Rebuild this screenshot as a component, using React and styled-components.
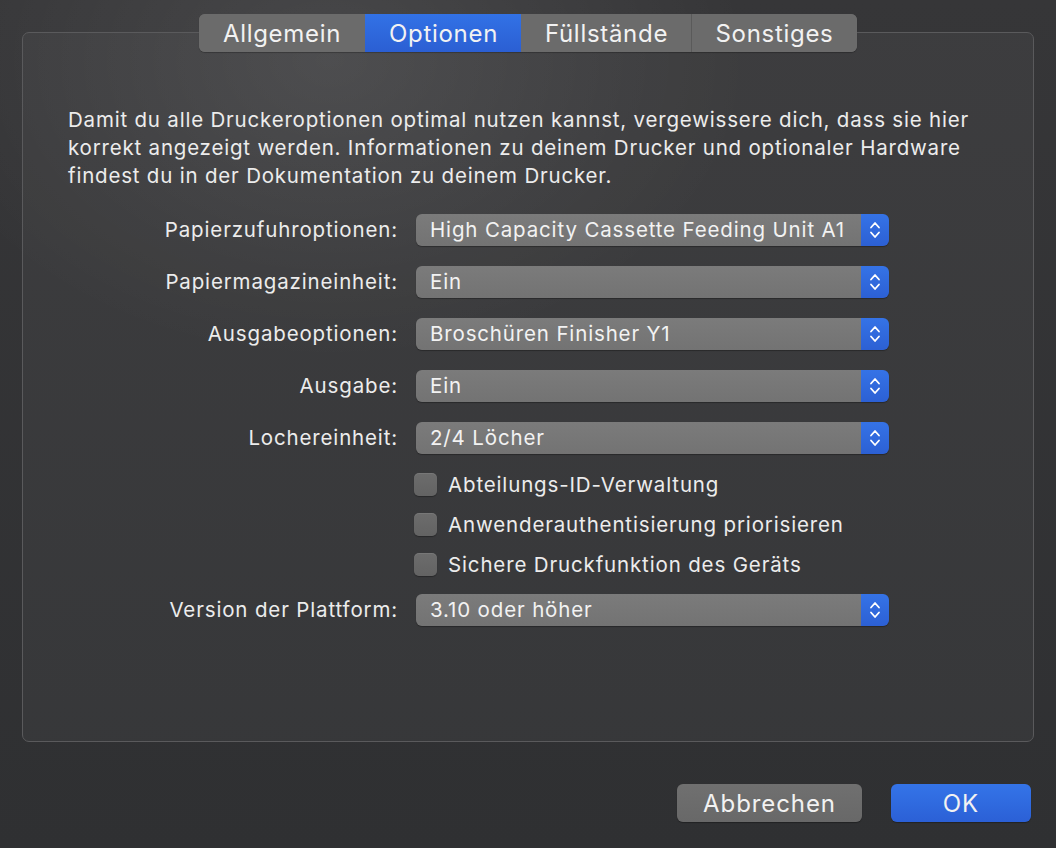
import React from "react";
import styled, { createGlobalStyle } from "styled-components";

const GlobalStyle = createGlobalStyle`
    html, body {
        margin: 0;
        padding: 0;
        background: #2f3032;
    }
    * {
        box-sizing: border-box;
    }
`;

const Window = styled.div`
    width: 1056px;
    height: 848px;
    display: flex;
    flex-direction: column;
    padding: 14px 22px 26px 22px;
    font-family: Inter, "Noto Sans", "Liberation Sans", sans-serif;
    color: #ececec;
    background:
        radial-gradient(ellipse 420px 300px at 330px 60px, rgba(255, 255, 255, 0.09), rgba(255, 255, 255, 0) 100%),
        linear-gradient(180deg, #363638 0%, #2f3032 100%);
`;

const TabBar = styled.div`
    align-self: center;
    display: flex;
    height: 38px;
    margin-bottom: -20px;
    position: relative;
    z-index: 1;
    border-radius: 6px;
    overflow: hidden;
    background: #6b6b6b;
    box-shadow: 0 1px 1px rgba(0, 0, 0, 0.25);
`;

const Tab = styled.div`
    width: ${({ $w }) => $w}px;
    display: flex;
    align-items: center;
    justify-content: center;
    font-size: 24px;
    letter-spacing: 0.7px;
    color: #f2f2f2;
    background: ${({ $active }) => ($active ? "linear-gradient(180deg, #3272e6 0%, #2b5fd3 100%)" : "#6b6b6b")};
    border-left: 1px solid ${({ $divider }) => ($divider ? "#5a5a5a" : "transparent")};
    &:first-child {
        border-left: none;
    }
`;

const GroupBox = styled.div`
    height: 710px;
    border: 1px solid #5a5a5c;
    border-radius: 7px;
    background: rgba(255, 255, 255, 0.035);
    padding: 73px 0 0 45px;
`;

const Intro = styled.p`
    margin: 0 0 24px 0;
    font-size: 20.5px;
    letter-spacing: 0.8px;
    line-height: 28px;
    width: 925px;
`;

const Form = styled.div`
    display: grid;
    grid-template-columns: 330px 473px;
    column-gap: 18px;
    align-items: center;
    font-size: 20.5px;
    letter-spacing: 0.85px;
`;

const Label = styled.div`
    text-align: right;
    height: 32px;
    line-height: 32px;
    white-space: nowrap;
    margin-bottom: ${({ $mb }) => $mb}px;
`;

const Popup = styled.div`
    height: 32px;
    display: flex;
    border-radius: 6px;
    overflow: hidden;
    margin-bottom: ${({ $mb }) => $mb}px;
    box-shadow: 0 1px 1px rgba(0, 0, 0, 0.3);
`;

const PopupValue = styled.div`
    flex: 1;
    padding-left: 14px;
    line-height: 32px;
    color: #f2f2f2;
    background: linear-gradient(180deg, #7b7b7b 0%, #737373 100%);
    white-space: nowrap;
`;

const PopupArrow = styled.div`
    width: 28px;
    display: flex;
    align-items: center;
    justify-content: center;
    background: linear-gradient(180deg, #3573e6 0%, #2c60d4 100%);
`;

const CheckRow = styled.label`
    grid-column: 2;
    display: flex;
    align-items: center;
    gap: 11px;
    height: 24px;
    margin-left: -2px;
    margin-bottom: ${({ $mb }) => $mb}px;
    white-space: nowrap;
`;

const Box = styled.span`
    width: 23px;
    height: 23px;
    flex-shrink: 0;
    border-radius: 5px;
    background: linear-gradient(180deg, #6c6c6c 0%, #636363 100%);
    box-shadow: inset 0 1px 0 rgba(255, 255, 255, 0.08), 0 1px 1px rgba(0, 0, 0, 0.3);
`;

const Footer = styled.div`
    margin-top: auto;
    display: flex;
    justify-content: flex-end;
    gap: 29px;
    padding-right: 3px;
`;

const Button = styled.button`
    width: ${({ $w }) => $w}px;
    height: 38px;
    border: none;
    border-radius: 6px;
    font-family: inherit;
    font-size: 24px;
    letter-spacing: 0.9px;
    color: #f2f2f2;
    background: ${({ $primary }) =>
        $primary ? "linear-gradient(180deg, #3474e8 0%, #2b60d6 100%)" : "linear-gradient(180deg, #707070 0%, #686868 100%)"};
    box-shadow: 0 1px 1px rgba(0, 0, 0, 0.3);
`;

const Stepper = () => (
    <svg width="12" height="20" viewBox="0 0 12 20" fill="none" stroke="#fff" strokeWidth="1.8" strokeLinecap="round" strokeLinejoin="round">
        <path d="M2 7.5 L6 3 L10 7.5" />
        <path d="M2 12.5 L6 17 L10 12.5" />
    </svg>
);

const tabs = [
    { label: "Allgemein", w: 166 },
    { label: "Optionen", w: 156, active: true },
    { label: "Füllstände", w: 170 },
    { label: "Sonstiges", w: 166 },
];

const rows = [
    { label: "Papierzufuhroptionen:", value: "High Capacity Cassette Feeding Unit A1" },
    { label: "Papiermagazineinheit:", value: "Ein" },
    { label: "Ausgabeoptionen:", value: "Broschüren Finisher Y1" },
    { label: "Ausgabe:", value: "Ein" },
    { label: "Lochereinheit:", value: "2/4 Löcher" },
];

const checks = ["Abteilungs-ID-Verwaltung", "Anwenderauthentisierung priorisieren", "Sichere Druckfunktion des Geräts"];

export default function App() {
    return (
        <>
            <GlobalStyle />
            <Window>
                <TabBar>
                    {tabs.map((t, i) => (
                        <Tab key={t.label} $w={t.w} $active={t.active} $divider={!t.active && !tabs[i - 1]?.active}>
                            {t.label}
                        </Tab>
                    ))}
                </TabBar>
                <GroupBox>
                    <Intro>
                        Damit du alle Druckeroptionen optimal nutzen kannst, vergewissere dich, dass sie hier korrekt
                        angezeigt werden. Informationen zu deinem Drucker und optionaler Hardware findest du in der
                        Dokumentation zu deinem Drucker.
                    </Intro>
                    <Form>
                        {rows.map((r, i) => {
                            const mb = i === rows.length - 1 ? 18 : 20;
                            return (
                                <React.Fragment key={r.label}>
                                    <Label $mb={mb}>{r.label}</Label>
                                    <Popup $mb={mb}>
                                        <PopupValue>{r.value}</PopupValue>
                                        <PopupArrow>
                                            <Stepper />
                                        </PopupArrow>
                                    </Popup>
                                </React.Fragment>
                            );
                        })}
                        {checks.map((c, i) => (
                            <CheckRow key={c} $mb={i === checks.length - 1 ? 18 : 16}>
                                <Box />
                                {c}
                            </CheckRow>
                        ))}
                        <Label $mb={0}>Version der Plattform:</Label>
                        <Popup $mb={0}>
                            <PopupValue>3.10 oder höher</PopupValue>
                            <PopupArrow>
                                <Stepper />
                            </PopupArrow>
                        </Popup>
                    </Form>
                </GroupBox>
                <Footer>
                    <Button $w={185}>Abbrechen</Button>
                    <Button $w={140} $primary>
                        OK
                    </Button>
                </Footer>
            </Window>
        </>
    );
}
